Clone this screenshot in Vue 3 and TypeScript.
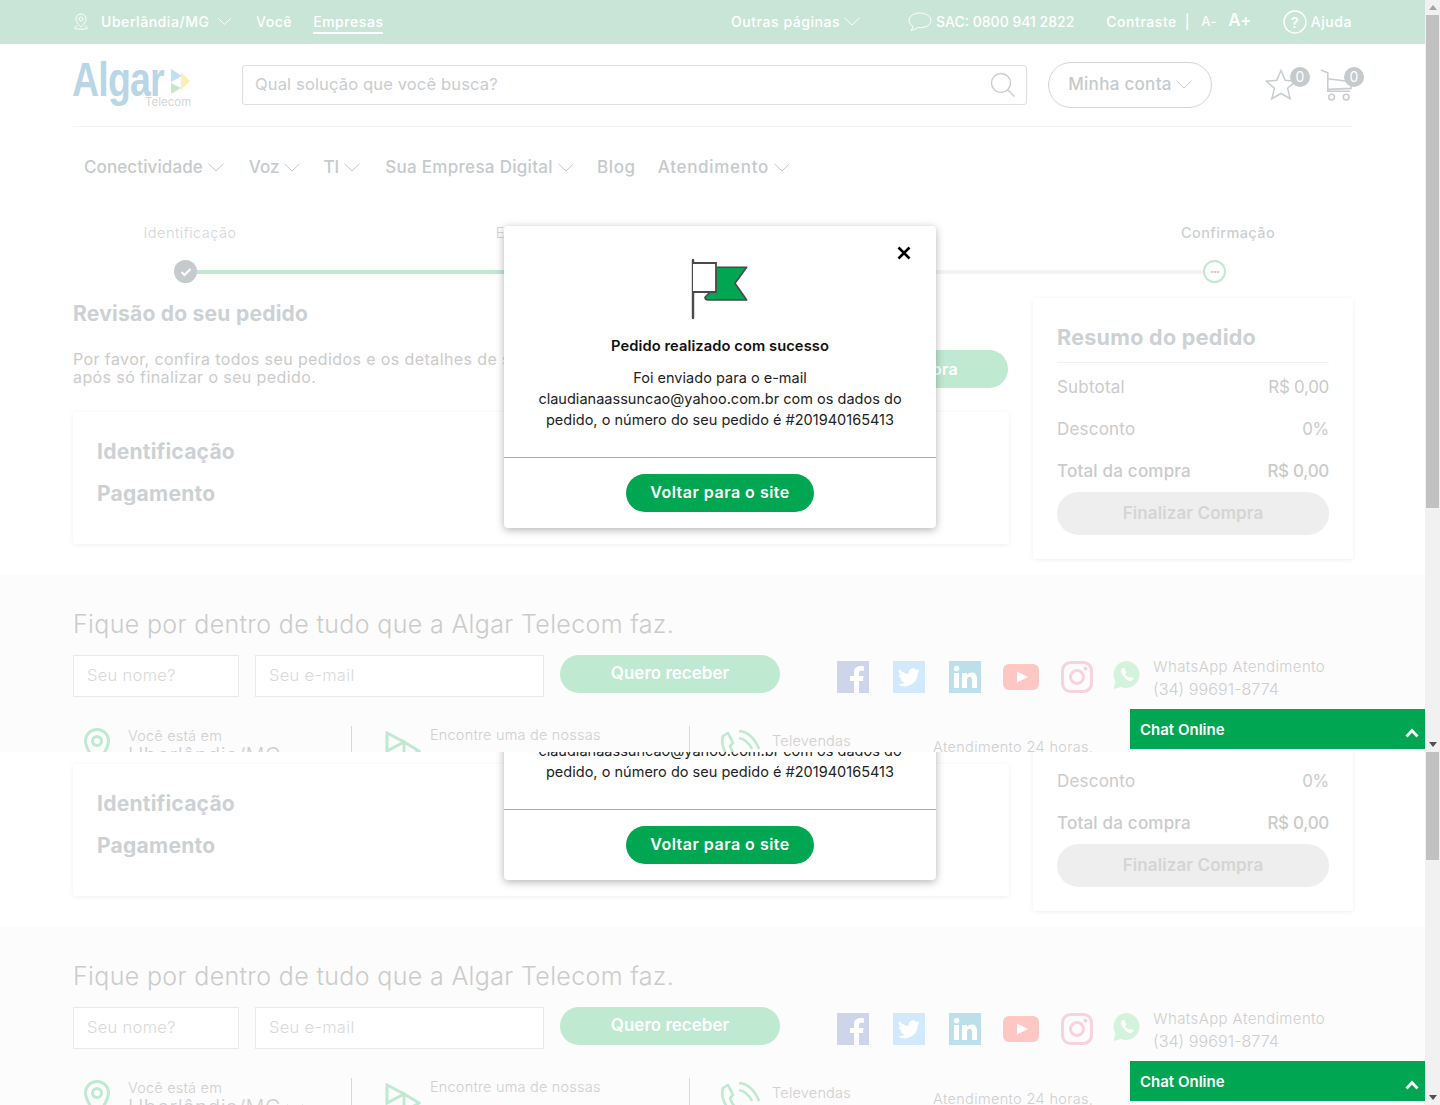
<script setup lang="ts">
interface Frame { height: number; offset: number; chatBottom: number; thumbTop: number; thumbHeight: number; upArrow: boolean }
const frames: Frame[] = [
  { height: 752, offset: 0, chatBottom: 3, thumbTop: 15, thumbHeight: 493, upArrow: true },
  { height: 353, offset: 400, chatBottom: 4, thumbTop: 0, thumbHeight: 108, upArrow: false },
]
const nav = [
  { label: 'Conectividade', chev: true, tracking: 0.1 },
  { label: 'Voz', chev: true, tracking: 0 },
  { label: 'TI', chev: true, tracking: 0 },
  { label: 'Sua Empresa Digital', chev: true, tracking: 0.3 },
  { label: 'Blog', chev: false, tracking: 0.65 },
  { label: 'Atendimento', chev: true, tracking: 0.7 },
]
const steps = ['Identificação', 'Endereço', 'Pagamento', 'Confirmação']
</script>

<template>
  <svg class="defs" aria-hidden="true">
    <symbol id="chev" viewBox="0 0 16 9"><path d="M.5.8 8 8l7.5-7.2" fill="none" stroke="currentColor" stroke-width="1" /></symbol>
  </svg>
  <div v-for="(f, i) in frames" :key="i" class="frame" :style="{ height: f.height + 'px' }">
    <div class="viewport">
      <div class="page" :style="{ marginTop: -f.offset + 'px' }">
        <div class="topbar">
          <svg class="ic-pin" viewBox="0 0 16 18"><path d="M8 1a5 5 0 0 0-5 5c0 3.500 5 8 5 8s5-4.500 5-8a5 5 0 0 0-5-5Z M4 12.500 1.500 15c0 1.500 13 1.500 13 0L12 12.500" fill="none" stroke="#fff" /><circle cx="8" cy="6" r="2" fill="none" stroke="#fff" /></svg>
          <span class="city">Uberlândia/MG</span>
          <svg class="chev city-chev"><use href="#chev" /></svg>
          <span class="tab">Você</span>
          <span class="tab active">Empresas</span>
          <span class="spacer"></span>
          <span>Outras páginas</span>
          <svg class="chev"><use href="#chev" /></svg>
          <svg class="ic-bubble" viewBox="0 0 24 20"><path d="M12 1C5.900 1 1 4.200 1 8.500c0 2.500 1.600 4.500 4 5.800-.2 1.500-1 3-2 4 2.500-.3 5-1.500 6.500-2.800 1 .2 1.700.2 2.500.2 6.100 0 11-3.200 11-7.200S18.100 1 12 1Z" fill="none" stroke="#fff" /></svg>
          <span class="sac">SAC: 0800 941 2822</span>
          <span class="contrast">Contraste</span>
          <span class="pipe">|</span>
          <span class="a-minus">A-</span>
          <span class="a-plus">A+</span>
          <svg class="ic-help" viewBox="0 0 24 24"><circle cx="12" cy="12" r="11" fill="none" stroke="#fff" stroke-width="1.300" /><text x="12" y="17.500" text-anchor="middle" font-size="15" fill="#fff" font-family="Inter, sans-serif">?</text></svg>
          <span>Ajuda</span>
        </div>

        <header class="header">
          <div class="logo">
            <div class="logo-top">
              <span class="logo-word">Algar</span>
              <svg class="logo-mark" viewBox="0 0 21 24"><path d="M1 0l11 7-11 6Z" fill="#bfe0f0" /><path d="M11 6l9 9-9 9Z" fill="#fdeeb8" transform="translate(0 -3)" /><path d="M1 14l10 5-10 6Z" fill="#c4e8cc" /></svg>
            </div>
            <span class="logo-sub">Telecom</span>
          </div>
          <div class="search">
            <input class="search-input" placeholder="Qual solução que você busca?" />
            <svg class="ic-search" viewBox="0 0 26 26"><circle cx="11" cy="11" r="9.500" fill="none" stroke="#c9cdcf" stroke-width="1.400" /><path d="m18 18 6.500 6.500" stroke="#c9cdcf" stroke-width="1.400" /></svg>
          </div>
          <div class="account">Minha conta <svg class="chev"><use href="#chev" /></svg></div>
          <div class="shop">
            <div class="shop-item star">
              <svg viewBox="0 0 34 34"><path d="m17 1.500 4.500 10.500 11 1-8.500 7.500 2.700 11L17 26l-9.700 5.500 2.700-11L1.500 13l11-1Z" fill="#fff" stroke="#c9cdcf" stroke-width="1.600" /></svg>
              <span class="badge">0</span>
            </div>
            <div class="shop-item cart">
              <svg viewBox="0 0 33 33"><path d="M1 1l7 3v19h23M8 10l24 3v7l-24 1" fill="none" stroke="#c9cdcf" stroke-width="1.600" /><circle cx="12" cy="29" r="3" fill="none" stroke="#c9cdcf" stroke-width="1.600" /><circle cx="27" cy="29" r="3" fill="none" stroke="#c9cdcf" stroke-width="1.600" /></svg>
              <span class="badge">0</span>
            </div>
          </div>
        </header>

        <nav class="nav">
          <span v-for="n in nav" :key="n.label" class="nav-item" :style="{ letterSpacing: n.tracking + 'px' }">{{ n.label }}<svg v-if="n.chev" class="chev"><use href="#chev" /></svg></span>
        </nav>

        <section class="stepper">
          <div class="step-labels">
            <span v-for="(s, k) in steps" :key="s" class="step-label" :class="{ last: k === 3 }">{{ s }}</span>
          </div>
          <div class="step-track">
            <span class="node done"><svg viewBox="0 0 12 10"><path d="m1.500 5 3 3 6-6" fill="none" stroke="#fff" stroke-width="2" /></svg></span>
            <span class="seg on"></span>
            <span class="node done"></span>
            <span class="seg on"></span>
            <span class="node done"></span>
            <span class="seg"></span>
            <span class="node todo">···</span>
          </div>
        </section>

        <main class="content">
          <div class="col-left">
            <h2 class="h-review">Revisão do seu pedido</h2>
            <div class="intro">
              <p>Por favor, confira todos seu pedidos e os detalhes de sua compra,<br />após só finalizar o seu pedido.</p>
              <span class="btn-green">Finalizar compra</span>
            </div>
            <div class="card">
              <h3>Identificação</h3>
              <h3>Pagamento</h3>
            </div>
          </div>
          <aside class="summary">
            <h2>Resumo do pedido</h2>
            <div class="sum-row"><span>Subtotal</span><span>R$ 0,00</span></div>
            <div class="sum-row"><span>Desconto</span><span>0%</span></div>
            <div class="sum-row total"><span>Total da compra</span><span>R$ 0,00</span></div>
            <div class="btn-grey">Finalizar Compra</div>
          </aside>
        </main>

        <footer class="footer">
          <h2 class="foot-title">Fique por dentro de tudo que a Algar Telecom faz.</h2>
          <div class="foot-form">
            <input class="f-input name" placeholder="Seu nome?" />
            <input class="f-input mail" placeholder="Seu e-mail" />
            <span class="f-btn">Quero receber</span>
            <div class="socials">
              <svg class="s32" viewBox="0 0 32 32"><rect width="32" height="32" fill="#cfd5e8" /><path d="M22 32V20h4l.6-5H22v-3c0-1.400.5-2.300 2.400-2.300H27V5.300C26.500 5.200 25 5 23.300 5 19.700 5 17 7.300 17 11.500V15h-4v5h4v12Z" fill="#fff" /></svg>
              <svg class="s32" viewBox="0 0 32 32"><rect width="32" height="32" fill="#d2e9fb" /><path d="M27 9.500c-.8.400-1.700.6-2.600.7.900-.6 1.600-1.400 2-2.500-.9.500-1.800.9-2.900 1.100a4.500 4.500 0 0 0-7.700 4.100C12 12.700 8.700 11 6.500 8.200a4.500 4.500 0 0 0 1.400 6c-.7 0-1.400-.2-2-.6 0 2.200 1.500 4 3.600 4.500-.7.200-1.400.2-2 .1.600 1.800 2.200 3.100 4.200 3.100A9 9 0 0 1 5 23.200 12.800 12.800 0 0 0 24.700 12c.9-.7 1.700-1.500 2.300-2.500Z" fill="#fff" /></svg>
              <svg class="s32" viewBox="0 0 32 32"><rect width="32" height="32" fill="#bcdfe9" /><rect x="5" y="12" width="5" height="15" fill="#fff" /><circle cx="7.500" cy="7.500" r="2.800" fill="#fff" /><path d="M13 12h5v2c1-1.500 2.500-2.400 4.500-2.400 4 0 5.500 2.500 5.500 6.500V27h-5v-8c0-2-.6-3.200-2.400-3.200-2 0-2.600 1.500-2.600 3.300V27h-5Z" fill="#fff" /></svg>
              <svg class="s-yt" viewBox="0 0 36 26"><rect width="36" height="26" rx="6" fill="#fec7c4" /><path d="m14 7.500 11 5.500-11 5.500Z" fill="#fff" /></svg>
              <svg class="s32 s-ig" viewBox="0 0 32 32"><rect x="1.500" y="1.500" width="29" height="29" rx="8" fill="none" stroke="#f9d2dd" stroke-width="3" /><circle cx="16" cy="16" r="6.500" fill="none" stroke="#f9d2dd" stroke-width="3" /><circle cx="24.500" cy="7.500" r="2" fill="#f9d2dd" /></svg>
              <svg class="s-wa" viewBox="0 0 28 28"><path d="M14 0a13.500 13.500 0 0 0-11.500 20.500L.5 28l7.500-2A13.500 13.500 0 1 0 14 0Z" fill="#d4f3dc" /><path d="M9.500 7c-2 1.500-2 4 0 7 2 3 4.500 5.500 7.500 6 1.500 0 3-1 3.500-2.500l-3.200-2-1.300 1.300c-1.500-.8-3-2.400-4-4l1.200-1.300L11.500 7Z" fill="#fff" /></svg>
              <div class="wa-text"><span>WhatsApp Atendimento</span><strong>(34) 99691-8774</strong></div>
            </div>
          </div>
          <div class="foot-info">
            <div class="info c1">
              <svg class="i-pin" viewBox="0 0 26 38"><path d="M13 1.500C6.500 1.500 1.500 6.500 1.500 13c0 8 11.500 23 11.500 23s11.500-15 11.500-23c0-6.500-5-11.500-11.500-11.500Z" fill="none" stroke="#bfe9d2" stroke-width="3" /><circle cx="13" cy="13" r="4.500" fill="none" stroke="#bfe9d2" stroke-width="3" /></svg>
              <div><span class="i-small">Você está em</span><span class="i-big">Uberlândia/MG <svg class="chev"><use href="#chev" /></svg></span></div>
            </div>
            <div class="info c2">
              <svg class="i-play" viewBox="0 0 36 30"><path d="M2 2v18l17-9ZM19 11v18l15-9Z" fill="none" stroke="#bfe9d2" stroke-width="3" /></svg>
              <div class="find"><span class="i-small">Encontre uma de nossas</span></div>
            </div>
            <div class="info c3">
              <svg class="i-phone" viewBox="0 0 42 36"><path d="M8 3 3 6C1 12 3 20 8 26s10 9 15 9l4-4-6-7-4 2c-3-2-6-6-7-10l3-3Z" fill="none" stroke="#bfe9d2" stroke-width="2.600" stroke-linejoin="round" /><path d="M19 1c9 1 16 8 20 18M19 8c6 1 10 5 13 11" fill="none" stroke="#bfe9d2" stroke-width="2.600" /></svg>
              <div class="tele"><span class="i-small">Televendas</span></div>
            </div>
            <div class="info c4"><span class="i-small wide">Atendimento 24 horas,</span></div>
          </div>
        </footer>

        <div class="modal" role="dialog">
          <svg class="m-close" viewBox="0 0 14 14"><path d="m1.500 1.500 11 11m0-11-11 11" stroke="#000" stroke-width="2.600" /></svg>
          <svg class="m-flag" viewBox="0 0 60 64">
            <path d="M26.700 10.300H56.700L45 26.300 56.700 43H18.300C16 43 15 41.500 15 40.300L20 35" fill="#00a651" stroke="#4a4a4a" stroke-width="1.600" stroke-linejoin="round" />
            <path d="M3 3v58" stroke="#4a4a4a" stroke-width="2.400" stroke-linecap="round" />
            <path d="M3 6H26V35H3" fill="#fff" stroke="#4a4a4a" stroke-width="1.800" />
          </svg>
          <h4 class="m-title">Pedido realizado com sucesso</h4>
          <p class="m-text">Foi enviado para o e-mail<br />claudianaassuncao@yahoo.com.br com os dados do<br />pedido, o número do seu pedido é #201940165413</p>
          <div class="m-foot"><span class="m-btn">Voltar para o site</span></div>
        </div>
      </div>

      <div class="chat" :style="{ bottom: f.chatBottom + 'px' }">
        <span>Chat Online</span>
        <svg viewBox="0 0 14 10"><path d="m1.500 8.500 5.500-6 5.500 6" fill="none" stroke="#fff" stroke-width="2.800" /></svg>
      </div>
    </div>
    <div class="scrollbar">
      <span v-if="f.upArrow" class="arrow up"></span>
      <span class="thumb" :style="{ top: f.thumbTop + 'px', height: f.thumbHeight + 'px' }"></span>
      <span class="arrow down"></span>
    </div>
  </div>
</template>

<style>
html, body { margin: 0; background: #fff; overflow: hidden; }
</style>

<style scoped>
* { box-sizing: border-box; }
.defs { position: absolute; width: 0; height: 0; }
.frame { display: flex; width: 1440px; overflow: hidden; font-family: Inter, "Noto Sans", sans-serif; }
.viewport { position: relative; width: 1425px; overflow: hidden; }
.page { position: relative; width: 1425px; background: #fff; }
h2, h3, h4, p { margin: 0; }
.chev { width: 16px; height: 9px; flex: none; color: inherit; }

.topbar { display: flex; align-items: center; height: 44px; padding: 0 73px 2px; background: #c9e5d8; color: #fff; font-size: 14px; font-weight: 500; letter-spacing: .55px; }
.ic-pin { width: 16px; height: 18px; margin: 2px 12px 0 0; }
.city { width: 109px; white-space: nowrap; }
.tab { margin: 2px 21px 0 0; line-height: 20px; }
.tab.active { margin: 4px 0 0; height: 22px; border-bottom: 2px solid #fff; }
.spacer { flex: 1; }
.topbar > .chev { margin-left: 4px; }
.topbar > .city-chev { margin-left: 8px; margin-right: 25px; width: 13px; }
.ic-bubble { width: 24px; height: 20px; margin: 2px 4px 0 48px; }
.sac { letter-spacing: 0; }
.contrast { margin-left: 32px; }
.pipe { margin-left: 8px; }
.a-minus { margin-left: 11px; font-size: 13px; }
.a-plus { margin-left: 11px; font-size: 17px; font-weight: 600; letter-spacing: .2px; margin-top: -3px; }
.ic-help { width: 24px; height: 24px; margin: 2px 4px 0 31px; }

.header { display: flex; align-items: center; height: 83px; margin: 0 73px 0; border-bottom: 1px solid #f2f3f3; position: relative; }
.logo { width: 169px; display: flex; flex-direction: column; color: #b9d6e6; margin-top: -3px; }
.logo-top { display: flex; align-items: center; height: 40px; }
.logo-word { display: inline-block; width: 93px; font: 700 48px/40px "Liberation Sans", sans-serif; transform: scaleX(.78); transform-origin: left center; letter-spacing: -1px; margin-left: -1px; }
.logo-mark { width: 21px; height: 24px; margin-left: 5px; margin-top: 2px; }
.logo-sub { margin: -4px 0 0 72px; font-size: 11.500px; color: #d3d6d8; line-height: 12px; }
.search { position: relative; width: 785px; height: 40px; }
.search-input { width: 100%; height: 100%; border: 1px solid #dcdee0; border-radius: 3px; padding: 0 12px 2px; font: 400 16.5px Inter, sans-serif; letter-spacing: .15px; outline: none; background: #fff; }
.search-input::placeholder { color: #c9cdcf; opacity: 1; }
.ic-search { position: absolute; right: 11px; top: 7px; width: 26px; height: 26px; }
.account { display: flex; align-items: center; justify-content: center; gap: 4px; width: 164px; height: 46px; margin: 0 0 0 21px; padding-bottom: 2px; border: 1px solid #d2d5d7; border-radius: 23px; color: #c5cacc; font-size: 17px; font-weight: 500; letter-spacing: .3px; }
.shop { display: flex; margin-left: 53px; gap: 23px; }
.shop-item { position: relative; width: 32px; height: 34px; }
.shop-item svg { display: block; width: 32px; height: 34px; }
.badge { position: absolute; left: 25px; top: -1px; width: 20px; height: 20px; border-radius: 50%; background: #c5cacc; color: #fff; font-size: 14px; line-height: 20px; text-align: center; }
.cart .badge { left: 24px; }

.nav { display: flex; gap: 25px; height: 82px; padding: 28px 0 0 84px; color: #c5cacc; font-size: 17px; font-weight: 500; }
.nav-item { display: inline-flex; align-items: center; gap: 5px; height: 24px; white-space: nowrap; }
.nav-item:nth-child(2) { margin-right: -2px; }
.nav-item:nth-child(5) { margin-left: -2px; margin-right: -3px; }

.stepper { padding: 0 73px; height: 93px; margin-top: -2px; }
.step-labels { display: flex; justify-content: space-between; padding: 16px 44px 0 37px; height: 54px; }
.step-label { width: 160px; text-align: center; font-size: 14.500px; color: #d3d6d8; font-weight: 300; letter-spacing: .5px; line-height: 20px; }
.step-label:nth-child(2) { margin-right: 18px; }
.step-label.last { font-weight: 500; color: #ccd0d2; letter-spacing: .4px; }
.step-track { display: flex; align-items: center; padding: 0 126px 0 101px; height: 23px; margin-top: -1px; }
.node { flex: none; display: flex; align-items: center; justify-content: center; width: 23px; height: 23px; border-radius: 50%; }
.node svg { width: 12px; height: 10px; }
.node.done { background: #c5cacc; }
.node.todo { border: 2px solid #bfe9d2; color: #c5cacc; font-size: 12px; font-weight: 700; letter-spacing: -1px; line-height: 1; }
.seg { flex: 1; height: 4px; background: #f3f3f3; }
.seg.on { background: #bfe9d2; }

.content { display: grid; grid-template-columns: 936px 320px; gap: 24px; padding: 0 72px 0 73px; height: 277px; margin-top: -2px; align-items: start; }
.h-review { margin-top: 1px; font-size: 21px; font-weight: 700; color: #ccd1d3; line-height: 30px; letter-spacing: .25px; }
.intro { position: relative; display: flex; justify-content: space-between; margin-top: 21px; height: 38px; }
.intro p { font-size: 16px; line-height: 18px; color: #cbcbcb; letter-spacing: .4px; white-space: nowrap; }
.btn-green { display: block; width: 232px; height: 38px; margin-right: 1px; border-radius: 19px; background: #c0e9d2; color: #fff; font-size: 16px; font-weight: 600; line-height: 38px; text-align: center; letter-spacing: .2px; }
.card { height: 132px; margin-top: 24px; padding: 25px 24px 0; border-radius: 3px; box-shadow: 0 1px 5px rgba(0, 0, 0, .07); }
.card h3 { height: 42px; font-size: 21px; line-height: 30px; font-weight: 700; color: #ccd1d3; letter-spacing: .25px; }
.summary { height: 261px; padding: 24px; border-radius: 3px; box-shadow: 0 1px 5px rgba(0, 0, 0, .07); }
.summary h2 { height: 41px; font-size: 21.500px; line-height: 30px; font-weight: 700; color: #ccd1d3; letter-spacing: .3px; border-bottom: 1px solid #f0f1f1; }
.sum-row { display: flex; justify-content: space-between; height: 42px; align-items: center; font-size: 17px; color: #cbcbcb; letter-spacing: .2px; }
.sum-row:nth-of-type(1) { margin-top: 3px; }
.sum-row span:last-child { letter-spacing: -.3px; }
.sum-row.total { font-weight: 500; }
.btn-grey { height: 43px; border-radius: 22px; background: #eee; color: #d5d5d5; font-size: 17px; font-weight: 600; line-height: 43px; text-align: center; letter-spacing: .1px; }

.footer { height: 400px; padding: 31px 73px 0; background: #fcfcfc; }
.foot-title { font-size: 25px; font-weight: 300; color: #cbcbcb; line-height: 36px; letter-spacing: .35px; white-space: nowrap; }
.foot-form { display: flex; align-items: flex-start; margin-top: 13px; height: 71px; }
.f-input { height: 42px; border: 1px solid #e9e9e9; padding: 0 13px 2px; font: 300 16.500px Inter, sans-serif; letter-spacing: .3px; background: #fff; outline: none; }
.f-input::placeholder { color: #d9d9d9; opacity: 1; }
.name { width: 166px; margin-right: 16px; }
.mail { width: 289px; margin-right: 16px; }
.f-btn { width: 220px; height: 38px; border-radius: 19px; background: #c0e9d2; color: #fff; font-size: 17px; font-weight: 600; line-height: 36px; text-align: center; }
.socials { display: flex; align-items: center; margin: 0 0 0 57px; height: 44px; }
.socials svg { flex: none; }
.s32 { width: 32px; height: 32px; margin-right: 24px; }
.s-yt { width: 36px; height: 26px; margin: 0 22px 0 -2px; }
.s-ig { margin-right: 20px; }
.s-wa { width: 28px; height: 28px; margin: -4px 12px 0 0; }
.wa-text { display: flex; flex-direction: column; color: #cfcfcf; font-size: 15px; letter-spacing: .4px; margin-top: 4px; white-space: nowrap; }
.wa-text span { line-height: 20px; font-weight: 300; }
.wa-text strong { font-size: 16.200px; font-weight: 300; line-height: 24px; letter-spacing: 0; }
.foot-info { display: flex; color: #cfcfcf; height: 100px; }
.info { display: flex; align-items: flex-start; border-right: 1px solid #d8d8d8; height: 60px; }
.info > div { display: flex; flex-direction: column; }
.i-small { font-size: 14.500px; line-height: 20px; font-weight: 300; letter-spacing: .2px; white-space: nowrap; }
.i-small.wide { letter-spacing: .35px; }
.i-big { display: flex; align-items: center; gap: 6px; margin-top: -2px; font-size: 21px; line-height: 24px; font-weight: 300; white-space: nowrap; letter-spacing: .4px; }
.i-big .chev { color: #bbb; }
.c1 { width: 279px; padding-left: 11px; gap: 18px; }
.i-pin { width: 26px; height: 38px; margin-top: 2px; }
.c2 { width: 338px; padding-left: 33px; gap: 9px; }
.i-play { width: 36px; height: 30px; margin-top: 5px; }
.info > .find { margin-top: -1px; }
.c3 { width: 243px; padding-left: 30px; gap: 10px; border-right: 0; }
.i-phone { width: 42px; height: 36px; margin-top: 4px; }
.info > .tele { padding-top: 5px; }
.c4 { border-right: 0; padding-top: 11px; }

.modal { position: absolute; left: 504px; top: 226px; width: 432px; height: 302px; background: #fff; border-radius: 4px; box-shadow: 0 2px 8px rgba(0, 0, 0, .3); display: flex; flex-direction: column; align-items: center; color: #111; }
.m-close { position: absolute; right: 25px; top: 20px; width: 14px; height: 14px; }
.m-flag { width: 60px; height: 64px; margin-top: 31px; }
.m-title { margin-top: 15px; font-size: 14.700px; font-weight: 600; line-height: 20px; letter-spacing: .08px; }
.m-text { margin-top: 11px; height: 67px; font-size: 14.500px; font-weight: 400; line-height: 21px; text-align: center; letter-spacing: .02px; white-space: nowrap; color: #222; }
.m-foot { width: 100%; margin-top: 23px; padding-top: 16px; border-top: 1px solid #aaa; display: flex; justify-content: center; }
.m-btn { width: 188px; height: 38px; border-radius: 19px; background: #00a651; color: #fff; font-size: 16px; font-weight: 600; line-height: 37px; text-align: center; letter-spacing: .5px; }

.chat { position: absolute; right: 0; width: 295px; height: 40px; display: flex; align-items: center; justify-content: space-between; padding: 0 6px 0 10px; background: #00a651; color: #fff; font-size: 15px; font-weight: 600; }
.chat svg { width: 14px; height: 10px; margin-top: 7px; }

.scrollbar { position: relative; width: 15px; background: #f1f1f1; flex: none; }
.thumb { position: absolute; left: 1px; width: 13px; background: #c1c1c1; }
.arrow { position: absolute; left: 3.500px; width: 0; height: 0; border-left: 4px solid transparent; border-right: 4px solid transparent; }
.arrow.up { top: 5px; border-bottom: 5px solid #a3a3a3; }
.arrow.down { bottom: 5px; border-top: 5px solid #505050; }
</style>
